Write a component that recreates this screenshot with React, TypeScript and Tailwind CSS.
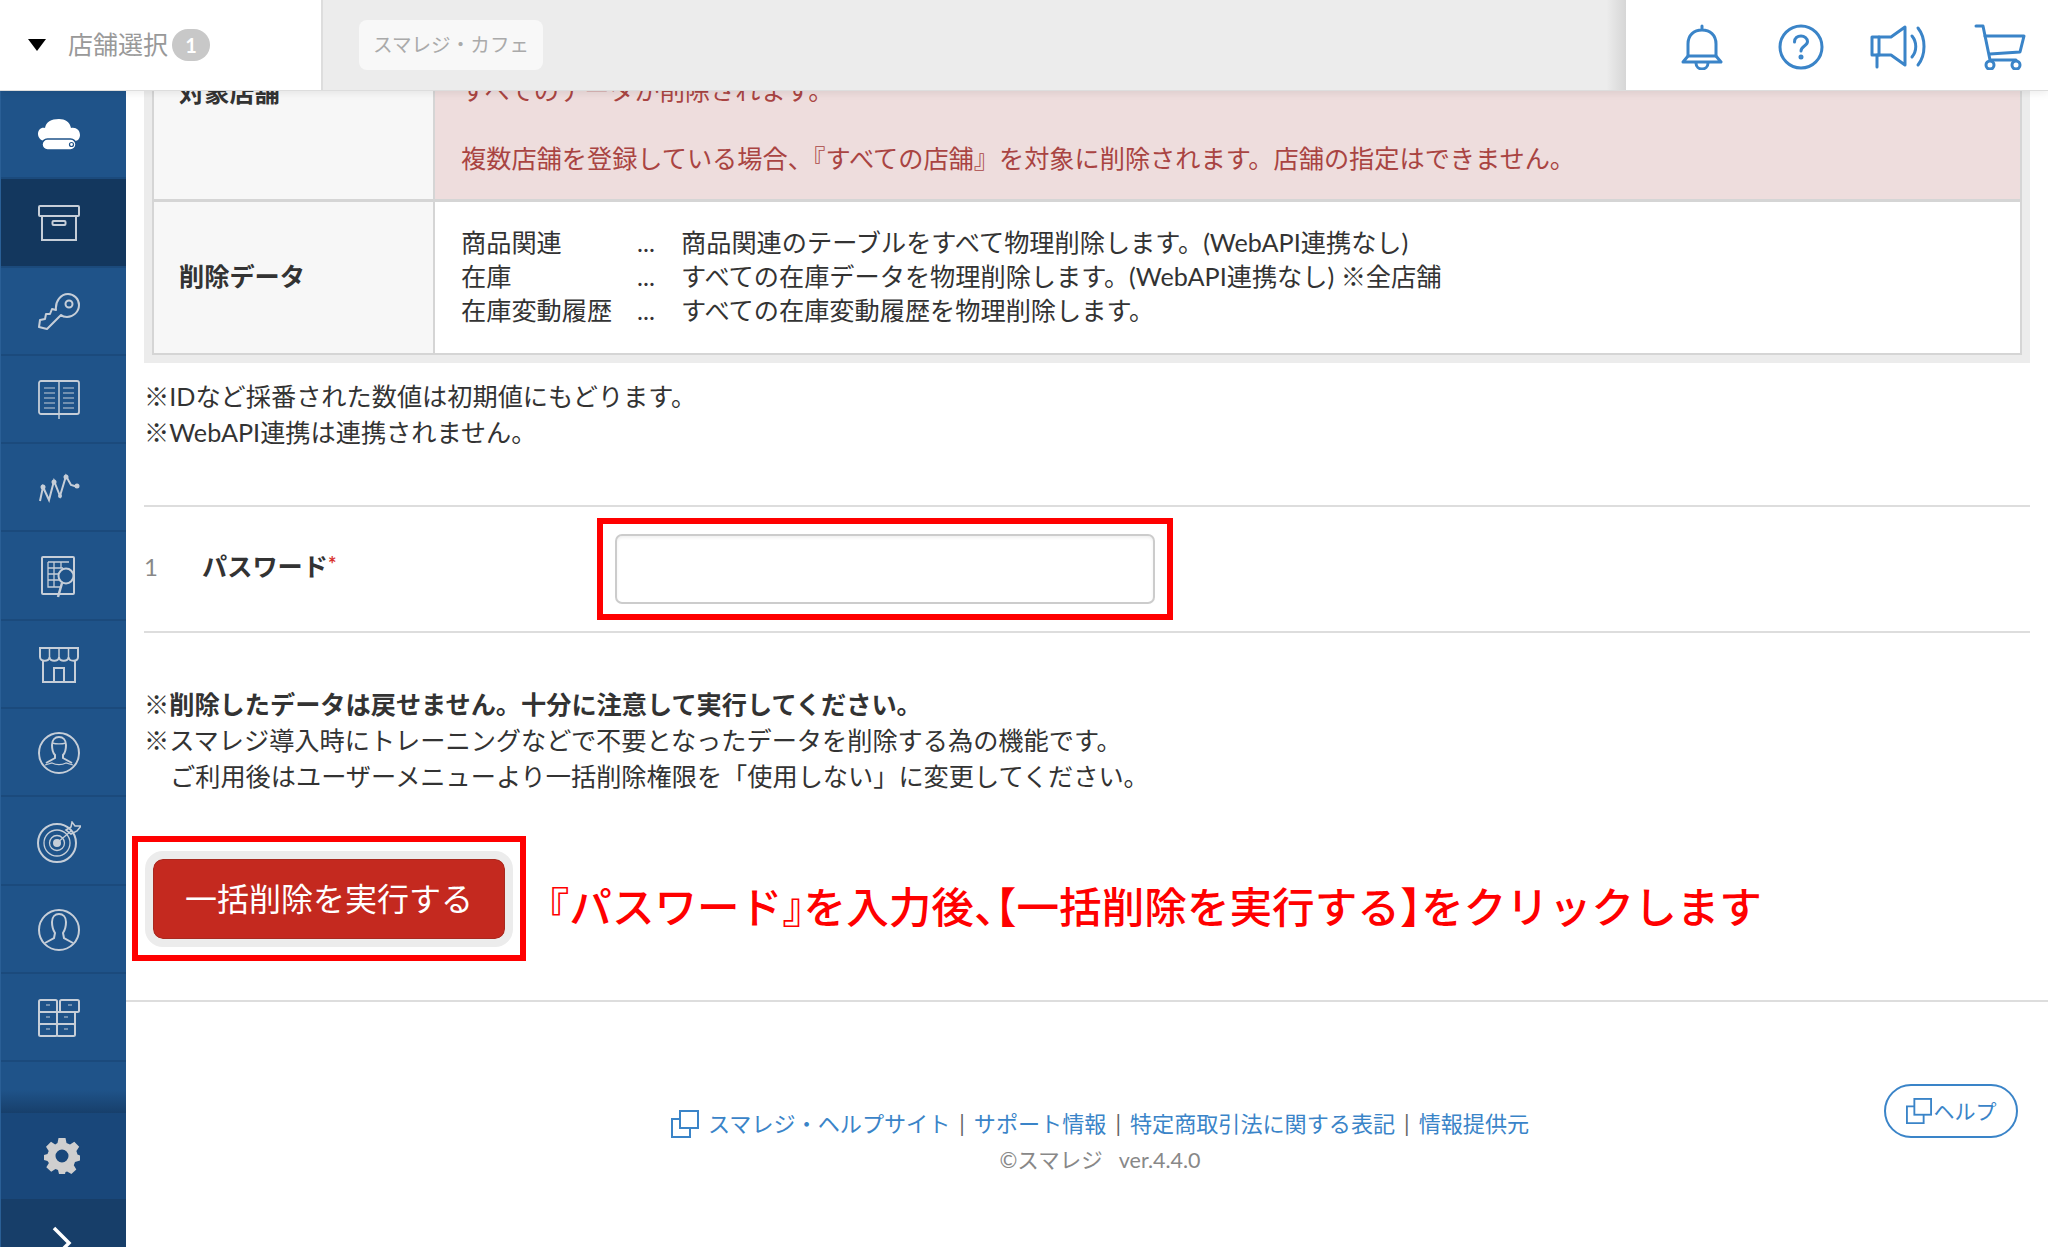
import React from "react";

const jp = `font-['Lato','Noto_Sans_CJK_JP',sans-serif]`;

const IconCloud = () => (
  <svg width="42" height="32" viewBox="0 0 42 32" fill="#fff">
    <path d="M6 22C2 21 0 18 0 15 0 11 3 8 7 9 8 3 13 0 21 0c6 0 11 3 12 9 5-1 9 2 9 7 0 3-2 6-5 6z" />
    <rect x="4" y="20" width="34" height="11" rx="5.500" stroke="#1f5389" strokeWidth="1.500" />
    <circle cx="33.500" cy="25.500" r="2" fill="none" stroke="#1f5389" strokeWidth="1.200" />
  </svg>
);

const IconBox = () => (
  <svg width="42" height="36" viewBox="0 0 42 36" fill="none" stroke="#c6ced8" strokeWidth="2">
    <rect x="1" y="1" width="40" height="10" rx="1" />
    <path d="M4 11v24h34V11" />
    <rect x="14.500" y="16" width="13" height="4" rx="1" />
  </svg>
);

const IconKey = () => (
  <svg width="42" height="38" viewBox="0 0 42 38" fill="none" stroke="#c6ced8" strokeWidth="2" strokeLinejoin="round">
    <path d="M18 17C17 8 23 1 30 1c6 0 11 5 11 11 0 7-6 12-12 12-3 0-5-1-6-2L9 36l-8-2 1-7 5-1 1-5 4 0 2-5z" />
    <circle cx="31" cy="11" r="3.500" />
  </svg>
);

const IconBook = () => (
  <svg width="42" height="40" viewBox="0 0 42 40" fill="none" stroke="#c6ced8" strokeWidth="1.800">
    <rect x="1" y="1" width="40" height="33" rx="2" />
    <path d="M21 1v38" strokeWidth="1.500" />
    <path d="M6 8h11M6 13h11M6 18h11M6 23h11M6 28h11M25 8h11M25 13h11M25 18h11M25 23h11M25 28h11" strokeWidth="1.100" />
  </svg>
);

const IconChart = () => (
  <svg width="42" height="30" viewBox="0 0 42 30" fill="none" stroke="#c6ced8" strokeWidth="2">
    <path d="M2 28 5 14l6 13 5-19 6 15 6-20 5 9 7 2" />
    <g fill="#c6ced8" stroke="none">
      <circle cx="5" cy="14" r="2.500" />
      <circle cx="16" cy="9" r="2.500" />
      <circle cx="28" cy="4" r="2.500" />
      <circle cx="39" cy="13" r="2.500" />
      <circle cx="22" cy="23" r="2" />
    </g>
  </svg>
);

const IconReport = () => (
  <svg width="36" height="42" viewBox="0 0 36 42" fill="none" stroke="#c6ced8" strokeWidth="2">
    <rect x="1" y="1" width="32" height="37" rx="1" />
    <path d="M7 6h21M7 6v25h14M7 12h15M7 18h13M7 24h13M13 6v25M20 6v6" strokeWidth="1.300" />
    <circle cx="25" cy="20" r="7.500" fill="#1f5389" />
    <path d="M21 27l-4 14" strokeWidth="2.500" />
  </svg>
);

const IconStore = () => (
  <svg width="40" height="36" viewBox="0 0 40 36" fill="none" stroke="#c6ced8" strokeWidth="2">
    <path d="M1 1h38v9c0 5-9 5-9.500 0 0 5-9.500 5-9.500 0 0 5-9.500 5-9.500 0 0 5-9.500 5-9.500 0z" />
    <path d="M10.500 1v9M20 1v9M29.500 1v9" strokeWidth="1.500" />
    <path d="M4 14v21h32V14M15 35V21h10v14" />
  </svg>
);

const IconPerson = () => (
  <svg width="42" height="42" viewBox="0 0 42 42" fill="none" stroke="#c6ced8" strokeWidth="2">
    <circle cx="21" cy="21" r="20" />
    <path d="M14 13c0-5 3-8 7-8s7 3 7 8c0 4-1 8-3 10v3l9 5M14 13c0 4 1 8 3 10v3l-9 5" />
    <path d="M14 11c4 1 10 1 14 0M7 33l7-2c4 2 10 2 14 0l7 2" strokeWidth="1.300" />
  </svg>
);

const IconTarget = () => (
  <svg width="44" height="42" viewBox="0 0 44 42" fill="none" stroke="#c6ced8" strokeWidth="2">
    <circle cx="20" cy="22" r="19" />
    <circle cx="20" cy="22" r="13" strokeWidth="1.300" />
    <circle cx="20" cy="22" r="7.500" strokeWidth="1.300" />
    <circle cx="20" cy="22" r="3" fill="#c6ced8" />
    <path d="M20 22 34 10" strokeWidth="1.300" />
    <path d="M29 9l5-3 1-5 3 4 6 0-4 5-6 3z" fill="none" strokeWidth="1.500" />
  </svg>
);

const IconPersonAlt = () => (
  <svg width="42" height="42" viewBox="0 0 42 42" fill="none" stroke="#c6ced8" strokeWidth="2">
    <circle cx="21" cy="21" r="20" />
    <path d="M14 13c0-5 3-8 7-8s7 3 7 8c0 4-1 8-3 11l1 5 9 5M14 13c0 4 1 8 3 11l-1 5-9 5" />
  </svg>
);

const IconDrawers = () => (
  <svg width="42" height="38" viewBox="0 0 42 38" fill="none" stroke="#c6ced8" strokeWidth="2">
    <rect x="1" y="1" width="18" height="12" rx="1.500" />
    <rect x="22" y="1" width="19" height="12" rx="1.500" />
    <rect x="1" y="13" width="18" height="12" />
    <rect x="19" y="13" width="18" height="12" />
    <rect x="1" y="25" width="18" height="12" rx="1.500" />
    <rect x="19" y="25" width="18" height="12" rx="1.500" />
    <path d="M8 6h4M30 6h4M8 18h4M26 18h4M8 30h4M26 30h4" strokeWidth="1.200" />
  </svg>
);

const IconGear = () => (
  <svg width="36" height="36" viewBox="0 0 36 36" fill="#cfcfcf">
    <path
      fillRule="evenodd"
      d="M14.500 0h7l1 5 3.500 1.500 4.300-2.800 4.900 5-2.800 4.200L33.500 16.500l2.500 1v5l-5 1.500-1.200 3.300 2.500 4.200-4.900 4.500-4.300-2.600-1.600.6L21 36h-6l-1-3.900-2.500-1-4.300 2.600-4.900-4.500 2.600-4.200L3.500 23 0 22v-5l3.500-1 1.200-3L2 8.700l5-5 4.200 2.800L13.500 5zM18 11.500a6.500 6.500 0 1 0 0 13 6.500 6.500 0 0 0 0-13z"
    />
  </svg>
);

const IconBell = () => (
  <svg width="42" height="46" viewBox="0 0 42 46" fill="none" stroke="#3a84c8" strokeWidth="3" strokeLinecap="round" strokeLinejoin="round">
    <path d="M21 2v3M2 38l5-6V20C7 11 13 6 21 6s14 5 14 14v12l5 6z" />
    <path d="M7 32h28" />
    <path d="M15 39c0 8 12 8 12 0" />
  </svg>
);

const IconQuestion = () => (
  <svg width="46" height="46" viewBox="0 0 46 46" fill="none" stroke="#3a84c8" strokeWidth="3" strokeLinecap="round">
    <circle cx="23" cy="23" r="21" />
    <path d="M16.500 18c0-4 3-6 6.500-6s6.500 2.500 6.500 5.500c0 4.500-6.500 4.500-6.500 9.500" />
    <circle cx="23" cy="33" r="1" fill="#3a84c8" />
  </svg>
);

const IconMegaphone = () => (
  <svg width="58" height="44" viewBox="0 0 58 44" fill="none" stroke="#3a84c8" strokeWidth="3" strokeLinecap="round" strokeLinejoin="round">
    <path d="M2 12h19L35 2v38L21 30H2z" />
    <path d="M9 12v18M7 30v12" />
    <path d="M42 11c5 6 5 15 0 21M48 3c8 10 8 27 0 37" />
  </svg>
);

const IconCart = () => (
  <svg width="52" height="46" viewBox="0 0 52 46" fill="none" stroke="#3a84c8" strokeWidth="3" strokeLinecap="round" strokeLinejoin="round">
    <path d="M2 2h7l7 34h26" />
    <path d="M11 12h39l-4 16-30 2" />
    <circle cx="16" cy="41" r="4" />
    <circle cx="42" cy="41" r="4" />
  </svg>
);

const IconWindow = ({ size = 28 }: { size?: number }) => (
  <svg width={size} height={size} viewBox="0 0 28 28" fill="none" stroke="#3a84c8" strokeWidth="2">
    <rect x="9" y="1" width="18" height="17" />
    <path d="M9 9H1v18h18v-9" />
  </svg>
);

const navItems = [
  { icon: <IconCloud /> },
  { icon: <IconBox />, active: true },
  { icon: <IconKey /> },
  { icon: <IconBook /> },
  { icon: <IconChart /> },
  { icon: <IconReport /> },
  { icon: <IconStore /> },
  { icon: <IconPerson /> },
  { icon: <IconTarget /> },
  { icon: <IconPersonAlt /> },
  { icon: <IconDrawers /> },
];

const Sidebar = () => (
  <aside className="flex w-[126px] shrink-0 flex-col overflow-hidden border-l border-[#2a5f96] bg-[#1f5389]">
    {navItems.map((item, index) => (
      <div
        key={index}
        className={`flex h-[88.3px] w-full shrink-0 items-center justify-center border-b-2 border-[#1b4a7c] pt-[2px] pr-[10px] ${
          item.active ? "bg-[#13375e]" : ""
        }`}
      >
        {item.icon}
      </div>
    ))}
    <div className="h-[51px] shrink-0 bg-[linear-gradient(to_bottom,#1f5389_55%,#173f6b_100%)]" />
    <div className="flex h-[86px] shrink-0 items-center justify-center bg-[#19477a] pr-[4px]">
      <IconGear />
    </div>
    <div className="flex min-h-0 flex-1 items-start justify-center overflow-hidden bg-[#173e69] pt-[27px] pr-1">
      <svg className="shrink-0" width="20" height="34" viewBox="0 0 20 34" fill="none" stroke="#fff" strokeWidth="3.500">
        <path d="M2 2l15 15L2 32" />
      </svg>
    </div>
  </aside>
);

const Header = () => (
  <header className="relative z-10 flex h-[91px] shrink-0 border-b border-[#dddddd] bg-white shadow-[0_2px_8px_rgba(0,0,0,0.08)]">
    <div className="flex w-[323px] items-center border-r-2 border-[#dddddd] pl-[28px]">
      <div className="h-0 w-0 border-x-[9px] border-t-[12px] border-x-transparent border-t-black" />
      <span className="ml-[22px] text-[25px] text-[#999999]">店舗選択</span>
      <span className="ml-[4px] flex h-[32px] w-[38px] items-center justify-center rounded-full bg-[#c8c8c8] text-[20px] font-bold text-white">
        1
      </span>
    </div>
    <div className="flex flex-1 items-center bg-[linear-gradient(to_right,#ececec_98.500%,#d6d6d6_100%)] pl-[36px]">
      <div className="flex h-[50px] w-[184px] items-center justify-center rounded-[8px] bg-[#f8f8f8] text-[19.600px] text-[#aaaaaa]">
        スマレジ・カフェ
      </div>
    </div>
    <div className="flex w-[422px] items-center justify-end gap-[46px] pt-[4px] pr-[22px]">
      <span className="mr-[9px] flex">
        <IconBell />
      </span>
      <IconQuestion />
      <IconMegaphone />
      <IconCart />
    </div>
  </header>
);

const dataRows = [
  ["商品関連", "商品関連のテーブルをすべて物理削除します。(WebAPI連携なし)"],
  ["在庫", "すべての在庫データを物理削除します。(WebAPI連携なし) ※全店舗"],
  ["在庫変動履歴", "すべての在庫変動履歴を物理削除します。"],
];

const InfoTable = () => (
  <div className="-mt-[10px] mr-[18px] ml-[18px] border-x-[8px] border-b-[8px] border-[#ececec]">
    <div className="border-x-2 border-b-2 border-[#d5d5d5]">
      <div className="flex h-[121px] border-b-[3px] border-[#d5d5d5]">
        <div className="flex w-[281px] shrink-0 items-start border-r-2 border-[#d5d5d5] bg-[#f7f7f7] pl-[25px] font-bold text-[#333333]">
          <span className="-mt-[7px]">対象店舗</span>
        </div>
        <div className="flex-1 bg-[#eedddd] pl-[26px] leading-[33px] text-[#a94442]">
          <p className="-mt-[7px]">すべてのデータが削除されます。</p>
          <p className="mt-[35px]">複数店舗を登録している場合、『すべての店舗』を対象に削除されます。店舗の指定はできません。</p>
        </div>
      </div>
      <div className="flex h-[151px]">
        <div className="flex w-[281px] shrink-0 items-center border-r-2 border-[#d5d5d5] bg-[#f7f7f7] pb-[2px] pl-[25px] font-bold text-[#333333]">
          削除データ
        </div>
        <div className="flex flex-1 flex-col justify-center pb-[4px] pl-[26px] leading-[34px] text-[#333333]">
          {dataRows.map(([label, text]) => (
            <div key={label} className="flex">
              <span className="w-[176px] shrink-0">{label}</span>
              <span className="w-[44px] shrink-0">...</span>
              <span>{text}</span>
            </div>
          ))}
        </div>
      </div>
    </div>
  </div>
);

export default function App() {
  return (
    <div className={`flex h-[1247px] w-[2048px] flex-col overflow-hidden bg-white text-[25.200px] ${jp}`}>
      <Header />
      <div className="flex min-h-0 flex-1">
        <Sidebar />
        <main className="flex min-w-0 flex-1 flex-col">
          <InfoTable />

          <div className="mt-[15px] ml-[18px] leading-[36px] text-[#333333]">
            <p>※IDなど採番された数値は初期値にもどります。</p>
            <p>※WebAPI連携は連携されません。</p>
          </div>

          <div className="mt-[55px] mr-[18px] ml-[18px] flex h-[128px] shrink-0 items-center border-y-2 border-[#dddddd]">
            <span className="w-[58px] pb-[4px] text-[24px] text-[#888888]">1</span>
            <span className="w-[395px] pb-[4px] font-bold text-[#333333]">
              パスワード<span className="relative -top-[4px] text-[20px] text-[#d9322e]">*</span>
            </span>
            <div className="flex h-[102px] w-[576px] items-center justify-center border-[6px] border-[#ff0000]">
              <input
                type="password"
                className="h-[70px] w-[540px] rounded-[7px] border-2 border-[#cccccc] bg-white shadow-[inset_0_2px_3px_rgba(0,0,0,0.06)]"
              />
            </div>
          </div>

          <div className="mt-[53px] ml-[18px] leading-[36px] text-[#333333]">
            <p className="font-bold">※削除したデータは戻せません。十分に注意して実行してください。</p>
            <p>※スマレジ導入時にトレーニングなどで不要となったデータを削除する為の機能です。</p>
            <p className="pl-[26px]">ご利用後はユーザーメニューより一括削除権限を「使用しない」に変更してください。</p>
          </div>

          <div className="mt-[42px] ml-[6px] flex shrink-0 items-center">
            <div className="flex h-[125px] w-[394px] items-center justify-center border-[6px] border-[#ff0000]">
              <button className="h-[96px] w-[368px] rounded-[18px] border-[8px] border-[#ececec] bg-[#c4291f] bg-clip-padding text-[32px] text-white shadow-[inset_0_0_0_1px_#a82a20]">
                一括削除を実行する
              </button>
            </div>
            <span className="mt-[16px] ml-[22px] text-[42.600px] font-medium whitespace-nowrap text-[#ff0000]">
              <span className="[font-feature-settings:'halt']">『</span>パスワード
              <span className="[font-feature-settings:'halt']">』</span>を入力後
              <span className="[font-feature-settings:'halt']">、【</span>一括削除を実行する
              <span className="[font-feature-settings:'halt']">】</span>をクリックします
            </span>
          </div>

          <div className="mt-[39px] h-[2px] shrink-0 bg-[#dddddd]" />

          <footer className="relative flex flex-col items-center pt-[105px] pl-[26px]">
            <div className="flex items-center gap-[9px] text-[22.100px] text-[#3a84c8]">
              <IconWindow />
              <span>スマレジ・ヘルプサイト</span>
              <span className="text-[#666666]">|</span>
              <span>サポート情報</span>
              <span className="text-[#666666]">|</span>
              <span>特定商取引法に関する表記</span>
              <span className="text-[#666666]">|</span>
              <span>情報提供元</span>
            </div>
            <p className="mt-[4px] text-[21.500px] text-[#888888]">©スマレジ&emsp;ver.4.4.0</p>
            <button className="absolute top-[82px] right-[30px] flex h-[54px] w-[134px] items-center justify-center gap-[2px] rounded-full border-2 border-[#3a84c8] text-[21px] text-[#3a84c8]">
              <IconWindow size={26} />
              ヘルプ
            </button>
          </footer>
        </main>
      </div>
    </div>
  );
}
